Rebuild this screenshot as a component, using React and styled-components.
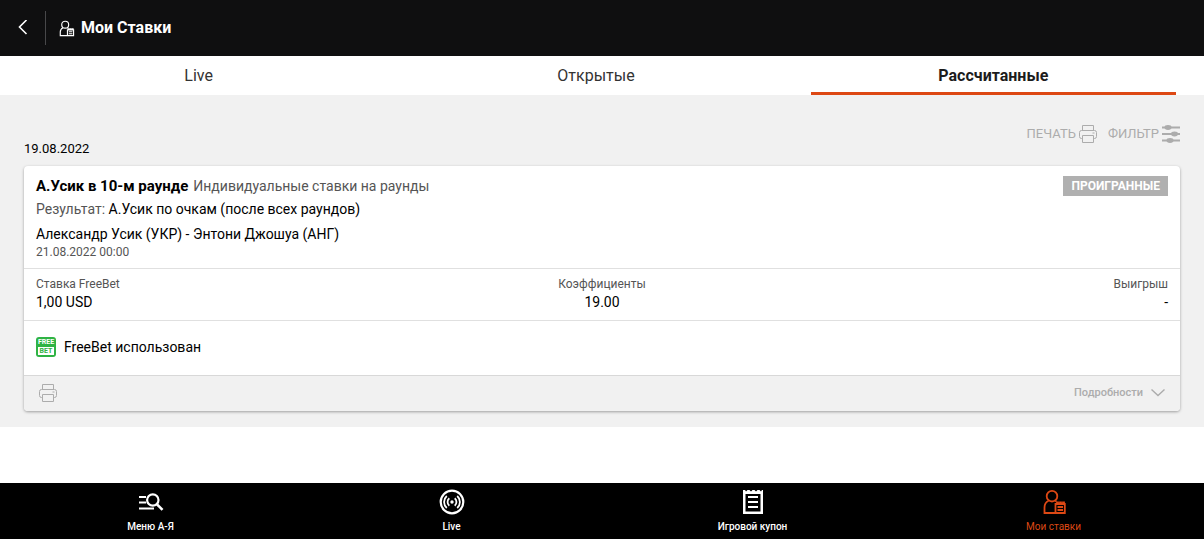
import React from "react";
import styled, { createGlobalStyle } from "styled-components";

const GlobalStyle = createGlobalStyle`
  *, *::before, *::after { box-sizing: border-box; }
  body { margin: 0; background: #fff; color: #000; font-family: Roboto, "Liberation Sans", sans-serif; font-size: 14px; }
  h1, p, dl, dd, dt { margin: 0; }
  button { border: 0; padding: 0; background: none; font-family: inherit; color: inherit; cursor: pointer; }
  svg { display: block; flex: none; }
`;

const Page = styled.div`
  display: flex;
  flex-direction: column;
  min-height: 100vh;
`;

const Header = styled.header`
  display: flex;
  align-items: center;
  height: 56px;
  background: #0f0f10;
  color: #fff;
`;

const BackButton = styled.button`
  display: flex;
  align-items: center;
  justify-content: center;
  width: 46px;
  height: 34px;
  border-right: 1px solid #48484a;
`;

const Title = styled.h1`
  display: flex;
  align-items: center;
  gap: 6px;
  padding-left: 12px;
  font-size: 16px;
  line-height: 20px;
  font-weight: 700;
`;

const Tabs = styled.nav`
  display: flex;
  height: 39px;
  padding-right: 12px;
  background: #fff;
`;

const Tab = styled.button`
  flex: 1 1 0;
  margin: 0 16px;
  border-bottom: 3px solid ${(p) => (p.$active ? "#dd4814" : "transparent")};
  padding-top: 4px;
  color: ${(p) => (p.$active ? "#1c1c1c" : "#333")};
  font-size: 16px;
  line-height: 20px;
  font-weight: ${(p) => (p.$active ? 700 : 400)};
`;

const History = styled.main`
  padding: 24px 24px 16px;
  background: #f1f1f1;
`;

const DayBar = styled.div`
  display: flex;
  align-items: flex-end;
  justify-content: space-between;
  height: 39px;
  margin-bottom: 8px;
  font-size: 13px;
  line-height: 18px;
`;

const DayActions = styled.div`
  display: flex;
  align-self: flex-start;
  gap: 11px;
`;

const ActionButton = styled.button`
  display: flex;
  align-items: center;
  gap: 3px;
  height: 29px;
  color: #acacac;
  font-size: 13px;
`;

const Card = styled.article`
  overflow: hidden;
  border-radius: 4px;
  background: #fff;
  box-shadow: 0 1px 3px rgba(0, 0, 0, 0.35);
`;

const Selection = styled.section`
  display: flex;
  align-items: flex-start;
  justify-content: space-between;
  padding: 10px 12px 8px;
`;

const Line = styled.p`
  margin-bottom: ${(p) => p.$gap || 0}px;
  line-height: 20px;
`;

const Outcome = styled(Line)`
  display: flex;
  flex-wrap: wrap;
  column-gap: 5px;

  strong { font-size: 15px; }
`;

const Muted = styled.span`
  color: #555;
`;

const EventTime = styled.time`
  display: block;
  color: #555;
  font-size: 12px;
  line-height: 16px;
`;

const Status = styled.span`
  padding: 0 8px;
  background: #b0b0b0;
  color: #fff;
  font-size: 12px;
  line-height: 20px;
  font-weight: 700;
`;

const Figures = styled.dl`
  display: grid;
  grid-template-columns: repeat(3, 1fr);
  height: 52px;
  padding: 7px 12px;
  border-top: 1px solid #e0e0e0;
`;

const Figure = styled.div`
  text-align: ${(p) => p.$align || "left"};

  dt { color: #555; font-size: 12px; line-height: 16px; }
  dd { line-height: 20px; }
`;

const Bonus = styled.div`
  display: flex;
  align-items: center;
  gap: 8px;
  height: 55px;
  padding: 0 12px 3px;
  border-top: 1px solid #e0e0e0;
`;

const BonusBadge = styled.span`
  display: flex;
  flex-direction: column;
  width: 20px;
  height: 20px;
  padding: 1px;
  border-radius: 3px;
  background: #2fb344;
  color: #fff;
  font-size: 7px;
  line-height: 9px;
  font-weight: 700;
  text-align: center;
`;

const BonusBadgeFoot = styled.span`
  margin: 0 1px;
  background: #fff;
  color: #2fb344;
  line-height: 8px;
`;

const CardFooter = styled.footer`
  display: flex;
  align-items: center;
  justify-content: space-between;
  height: 36px;
  padding: 0 15px 2px;
  border-top: 1px solid #d8d8d8;
  background: #f1f1f1;
`;

const FooterButton = styled.button`
  display: flex;
  align-items: center;
  gap: 8px;
  color: #acacac;
  font-size: 11px;
  line-height: 16px;
  font-weight: 500;
`;

const BottomNav = styled.nav`
  display: flex;
  height: 56px;
  margin-top: auto;
  background: #000;
`;

const NavLink = styled.a`
  display: flex;
  flex: 1 1 0;
  flex-direction: column;
  align-items: center;
  gap: 5px;
  padding-top: 6px;
  color: ${(p) => (p.$active ? "#dd4814" : "#fff")};
  font-size: 10px;
  line-height: 14px;
  font-weight: ${(p) => (p.$active ? 400 : 500)};
  text-decoration: none;
`;

const BackIcon = () => (
  <svg width="10" height="16" viewBox="0 0 10 16" fill="none" stroke="currentColor" strokeWidth="1.6" aria-hidden="true">
    <path d="M8.5 0 1.500 7l7 7" />
  </svg>
);

const UserBetIcon = ({ size, weight }) => (
  <svg width={size} height={size} viewBox="-1 -1 26 26" fill="none" stroke="currentColor" strokeWidth={weight} aria-hidden="true">
    <circle cx="10" cy="6.2" r="5.3" />
    <path d="M6.600 10.800C3.600 12.200 2.500 14.500 2.500 17.500V23H13M13.200 10.600l1.300 1" />
    <path d="M13.500 14h1.500v-1.500h1V14h2v-1.500h1V14h2v-1.500h1V14h.800v9h-9.300z" />
    <path d="M15.500 17h5.500M15.500 20h5.500" />
  </svg>
);

const PrinterIcon = ({ size }) => (
  <svg width={size} height={size} viewBox="0 0 18 18" fill="none" stroke="#acacac" aria-hidden="true">
    <path d="M3.5 5.5v-5h11v5M3.5 13.5h-1a2 2 0 0 1-2-2v-4a2 2 0 0 1 2-2h13a2 2 0 0 1 2 2v4a2 2 0 0 1-2 2h-1" />
    <path d="M3.5 10.5h11v7h-11zM13.5 8h2" />
  </svg>
);

const FilterIcon = () => (
  <svg width="18" height="18" viewBox="0 0 18 18" fill="#acacac" aria-hidden="true">
    <path d="M0 1.500h18v2H0zM0 8h18v2H0zM0 14.500h18v2H0z" />
    <ellipse cx="6" cy="2.500" rx="3.500" ry="2.400" />
    <ellipse cx="12.500" cy="9" rx="3.500" ry="2.400" />
    <ellipse cx="8" cy="15.500" rx="3.500" ry="2.400" />
  </svg>
);

const ChevronIcon = () => (
  <svg width="14" height="8" viewBox="0 0 14 8" fill="none" stroke="#acacac" strokeWidth="1.400" aria-hidden="true">
    <path d="m.5.5 6.5 6L13.500.5" />
  </svg>
);

const MenuIcon = () => (
  <svg width="26" height="26" viewBox="0 0 26 26" fill="none" stroke="currentColor" strokeWidth="2.200" aria-hidden="true">
    <path d="M1 8h7M1 13.500h7M1 19.500h15" />
    <circle cx="14.800" cy="11" r="5.700" />
    <path d="m18.500 14.800 6 6" strokeWidth="2.600" />
  </svg>
);

const LiveIcon = () => (
  <svg width="26" height="26" viewBox="0 0 26 26" fill="none" stroke="currentColor" strokeWidth="1.800" aria-hidden="true">
    <circle cx="13" cy="13" r="11.300" strokeWidth="2.200" />
    <circle cx="13" cy="13" r="1.700" fill="currentColor" stroke="none" />
    <path d="M10.300 9.300a4.800 4.800 0 0 0 0 7.400M15.700 9.300a4.800 4.800 0 0 1 0 7.400M7.800 7a8 8 0 0 0 0 12M18.200 7a8 8 0 0 1 0 12" />
  </svg>
);

const CouponIcon = () => (
  <svg width="26" height="26" viewBox="0 0 26 26" aria-hidden="true">
    <path fill="currentColor" fillRule="evenodd" d="M3 1h2l1 1.500L7.500 1h2L11 2.500 12.500 1h2L16 2.500 17.500 1h2L21 2.500 22 1h1v24H3zM5.500 5v17.500h15V5z" />
    <path stroke="currentColor" strokeWidth="2" d="M8 8h10M8 13h10M8 18h10" />
  </svg>
);

const TABS = ["Live", "Открытые", "Рассчитанные"];

const NAV = [
  { label: "Меню А-Я", icon: <MenuIcon /> },
  { label: "Live", icon: <LiveIcon /> },
  { label: "Игровой купон", icon: <CouponIcon /> },
  { label: "Мои ставки", icon: <UserBetIcon size={26} weight={1.8} />, active: true },
];

export default function App() {
  return (
    <Page>
      <GlobalStyle />
      <Header>
        <BackButton aria-label="Назад"><BackIcon /></BackButton>
        <Title><UserBetIcon size={17} weight={1.8} />Мои Ставки</Title>
      </Header>
      <Tabs>
        {TABS.map((label, i) => (
          <Tab key={label} $active={i === 2}>{label}</Tab>
        ))}
      </Tabs>
      <History>
        <DayBar>
          <time dateTime="2022-08-19">19.08.2022</time>
          <DayActions>
            <ActionButton>ПЕЧАТЬ<PrinterIcon size={18} /></ActionButton>
            <ActionButton>ФИЛЬТР<FilterIcon /></ActionButton>
          </DayActions>
        </DayBar>
        <Card>
          <Selection>
            <div>
              <Outcome $gap={3}><strong>А.Усик в 10-м раунде</strong> <Muted>Индивидуальные ставки на раунды</Muted></Outcome>
              <Line $gap={5}><Muted>Результат:</Muted> А.Усик по очкам (после всех раундов)</Line>
              <Line>Александр Усик (УКР) - Энтони Джошуа (АНГ)</Line>
              <EventTime dateTime="2022-08-21T00:00">21.08.2022 00:00</EventTime>
            </div>
            <Status>ПРОИГРАННЫЕ</Status>
          </Selection>
          <Figures>
            <Figure><dt>Ставка FreeBet</dt><dd>1,00 USD</dd></Figure>
            <Figure $align="center"><dt>Коэффициенты</dt><dd>19.00</dd></Figure>
            <Figure $align="right"><dt>Выигрыш</dt><dd>-</dd></Figure>
          </Figures>
          <Bonus>
            <BonusBadge>FREE<BonusBadgeFoot>BET</BonusBadgeFoot></BonusBadge>
            FreeBet использован
          </Bonus>
          <CardFooter>
            <FooterButton aria-label="Печать"><PrinterIcon size={18} /></FooterButton>
            <FooterButton>Подробности<ChevronIcon /></FooterButton>
          </CardFooter>
        </Card>
      </History>
      <BottomNav>
        {NAV.map(({ label, icon, active }) => (
          <NavLink key={label} href="#" $active={active}>{icon}{label}</NavLink>
        ))}
      </BottomNav>
    </Page>
  );
}
